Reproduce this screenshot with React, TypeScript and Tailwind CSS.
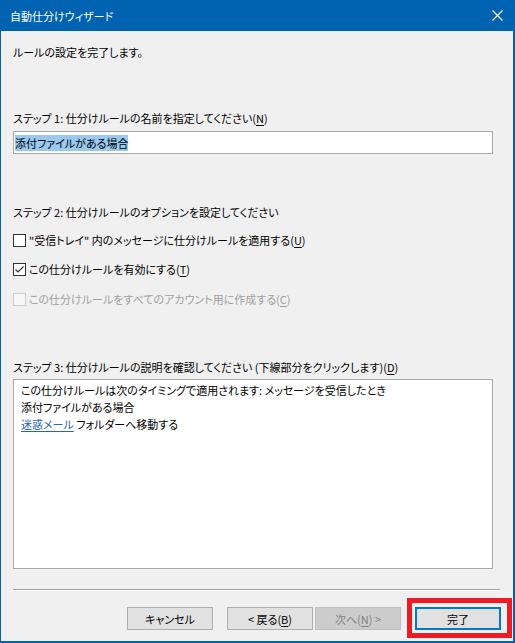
import React from 'react';

const Mn: React.FC<{ k: string }> = ({ k }) => (
  <>
    (<span className="underline underline-offset-2">{k}</span>)
  </>
);

const CheckBox: React.FC<{ checked?: boolean; disabled?: boolean }> = ({ checked, disabled }) => (
  <span
    className={
      'flex h-[13px] w-[13px] shrink-0 items-center justify-center border ' +
      (disabled ? 'border-[#cccccc] bg-[#f7f7f7]' : 'border-[#333333] bg-white')
    }
  >
    {checked && (
      <svg width="11" height="11" viewBox="0 0 11 11" fill="none">
        <path d="M1.5 5.5 L4 8 L9.5 2.5" stroke="#333333" strokeWidth="1.2" />
      </svg>
    )}
  </span>
);

const Btn: React.FC<{ children: React.ReactNode; disabled?: boolean; primary?: boolean }> = ({
  children,
  disabled,
  primary,
}) => (
  <div
    className={
      'flex h-[23px] w-[86px] items-center justify-center ' +
      (disabled
        ? 'border border-[#bfbfbf] bg-[#cccccc] text-[#838383]'
        : primary
          ? 'border-2 border-[#0078d7] bg-[#e1e1e1] text-black'
          : 'border border-[#adadad] bg-[#e1e1e1] text-black')
    }
  >
    {children}
  </div>
);

export default function App() {
  return (
    <div className="relative flex h-[643px] w-[515px] flex-col border-b-2 border-l border-r-2 border-[#0063b1] bg-[#f0f0f0] font-['Noto_Sans_CJK_JP','Noto_Sans',sans-serif] text-[11px] leading-[16px] text-black [font-feature-settings:'palt']">
      {/* title bar */}
      <div className="flex h-[31px] shrink-0 items-center justify-between bg-[#0063b1] pl-[9px] pr-[9px] text-white">
        <span>自動仕分けウィザード</span>
        <svg width="11" height="11" viewBox="0 0 11 11" className="mr-[1px]">
          <path d="M0.5 0.5 L10.5 10.5 M10.5 0.5 L0.5 10.5" stroke="white" strokeWidth="1.1" />
        </svg>
      </div>

      <div className="flex flex-1 flex-col px-[12px]">
        <div className="mt-[13px]">ルールの設定を完了します。</div>

        <div className="mt-[50px]">
          ステップ 1:&nbsp;仕分けルールの名前を指定してください<Mn k="N" />
        </div>
        <div className="mt-[5px] flex h-[23px] w-[480px] items-center border border-[#a9a9a9] bg-white pl-[1px]">
          <span className="bg-[#99c9ef]">添付ファイルがある場合</span>
        </div>

        <div className="mt-[50px]">ステップ 2:&nbsp;仕分けルールのオプションを設定してください</div>
        <div className="mt-[12px] flex h-[16px] items-center gap-[3px]">
          <CheckBox />
          <span>
            "受信トレイ" 内のメッセージに仕分けルールを適用する<Mn k="U" />
          </span>
        </div>
        <div className="mt-[13px] flex h-[16px] items-center gap-[3px]">
          <CheckBox checked />
          <span>
            この仕分けルールを有効にする<Mn k="T" />
          </span>
        </div>
        <div className="mt-[14px] flex h-[16px] items-center gap-[3px] text-[#a0a0a0]">
          <CheckBox disabled />
          <span>
            この仕分けルールをすべてのアカウント用に作成する<Mn k="C" />
          </span>
        </div>

        <div className="mt-[52px]">
          ステップ 3:&nbsp;仕分けルールの説明を確認してください (下線部分をクリックします)<Mn k="D" />
        </div>
        <div className="mt-[4px] flex h-[190px] w-[480px] flex-col border border-[#a9a9a9] bg-white px-[7px] pt-[2px] leading-[17px]">
          <div>この仕分けルールは次のタイミングで適用されます:&nbsp;メッセージを受信したとき</div>
          <div>添付ファイルがある場合</div>
          <div>
            <span className="text-[#2a62b8] underline underline-offset-2">迷惑メール</span> フォルダーへ移動する
          </div>
        </div>

        <div className="mt-[20px] h-[2px] w-[487px] border-t border-b border-t-[#a0a0a0] border-b-white" />

        <div className="mt-[16px] flex justify-end">
          <Btn>キャンセル</Btn>
          <div className="ml-[14px]">
            <Btn>
              &lt; 戻る<Mn k="B" />
            </Btn>
          </div>
          <div className="ml-[2px]">
            <Btn disabled>
              次へ<Mn k="N" /> &gt;
            </Btn>
          </div>
          <div className="ml-[14px]">
            <Btn primary>完了</Btn>
          </div>
        </div>
      </div>

      {/* highlight annotation */}
      <div className="pointer-events-none absolute left-[406px] top-[598px] h-[40px] w-[105px] border-[5px] border-[#ed1c24]" />
    </div>
  );
}
